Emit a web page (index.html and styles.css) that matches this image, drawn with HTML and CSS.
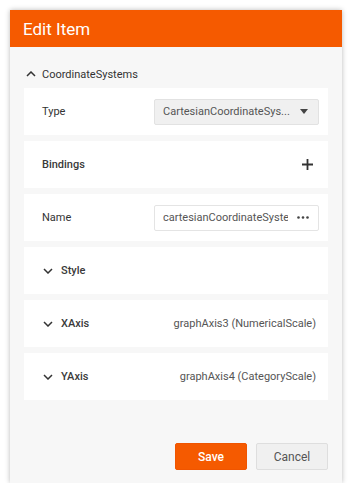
FILE: index.html
```html
<!DOCTYPE html>
<html>
<head>
<meta charset="utf-8">
<link rel="stylesheet" href="styles.css">
</head>
<body>
<div class="dialog">
  <div class="header">Edit Item</div>
  <div class="body">
    <div class="section-title">
      <svg class="chev" width="10" height="6" viewBox="0 0 10 6"><path d="M1 5 L5 1 L9 5" fill="none" stroke="#333" stroke-width="1.5"/></svg>
      <span>CoordinateSystems</span>
    </div>
    <div class="cards">
      <div class="card">
        <span class="label">Type</span>
        <div class="select">
          <span class="val">CartesianCoordinateSys...</span>
          <svg width="8" height="5" viewBox="0 0 8 5"><path d="M0 0 H8 L4 5 Z" fill="#444"/></svg>
        </div>
      </div>
      <div class="card">
        <span class="label strong">Bindings</span>
        <svg class="plus" width="11" height="11" viewBox="0 0 11 11"><path d="M5.5 0 V11 M0 5.5 H11" stroke="#333" stroke-width="1.8"/></svg>
      </div>
      <div class="card">
        <span class="label">Name</span>
        <div class="input">
          <span class="val">cartesianCoordinateSystem1</span>
          <svg class="dots" width="12" height="3" viewBox="0 0 12 3"><circle cx="1.5" cy="1.5" r="1.3" fill="#444"/><circle cx="6" cy="1.5" r="1.3" fill="#444"/><circle cx="10.5" cy="1.5" r="1.3" fill="#444"/></svg>
        </div>
      </div>
      <div class="card">
        <svg class="chev2" width="10" height="6" viewBox="0 0 10 6"><path d="M1 1 L5 5 L9 1" fill="none" stroke="#333" stroke-width="1.5"/></svg>
        <span class="label strong">Style</span>
      </div>
      <div class="card">
        <svg class="chev2" width="10" height="6" viewBox="0 0 10 6"><path d="M1 1 L5 5 L9 1" fill="none" stroke="#333" stroke-width="1.5"/></svg>
        <span class="label strong">XAxis</span>
        <span class="summary">graphAxis3 (NumericalScale)</span>
      </div>
      <div class="card">
        <svg class="chev2" width="10" height="6" viewBox="0 0 10 6"><path d="M1 1 L5 5 L9 1" fill="none" stroke="#333" stroke-width="1.5"/></svg>
        <span class="label strong">YAxis</span>
        <span class="summary">graphAxis4 (CategoryScale)</span>
      </div>
    </div>
  </div>
  <div class="footer">
    <button class="btn save">Save</button>
    <button class="btn cancel">Cancel</button>
  </div>
</div>
</body>
</html>
```

FILE: styles.css
```css
* { box-sizing: border-box; }
body {
  margin: 0;
  background: #fff;
  font-family: Roboto, "Liberation Sans", sans-serif;
}
.dialog {
  margin: 10px 0 0 10px;
  width: 332px;
  height: 473px;
  background: #f7f7f7;
  box-shadow: 0 0 5px rgba(0,0,0,0.28);
  display: flex;
  flex-direction: column;
}
.header {
  height: 37px;
  background: #f55a00;
  color: #fff;
  font-size: 17px;
  display: flex;
  align-items: center;
  padding-left: 13px;
}
.body {
  flex: 1;
  padding: 0 14px;
}
.section-title {
  display: flex;
  align-items: center;
  height: 14px;
  margin: 20px 0 7px 2px;
  font-size: 11px;
  color: #333;
}
.section-title .chev { margin-right: 6px; }
.cards {
  display: flex;
  flex-direction: column;
  gap: 6px;
}
.card {
  height: 47px;
  background: #fff;
  display: flex;
  align-items: center;
  padding: 0 9px 0 18px;
  font-size: 11px;
  color: #333;
}
.label { flex: 1; }
.label.strong { font-weight: 500; color: #3a3a3a; }
.chev2 { margin-right: 8px; margin-left: 1px; }
.select, .input {
  width: 165px;
  height: 26px;
  display: flex;
  align-items: center;
  padding: 0 8px 0 8px;
  color: #555;
  font-size: 11px;
  border-radius: 2px;
}
.select {
  background: #f0f0f0;
  border: 1px solid #e2e2e2;
}
.input {
  background: #fff;
  border: 1px solid #e4e4e4;
}
.val {
  flex: 1;
  overflow: hidden;
  white-space: nowrap;
}
.select svg { margin: 0 2px 0 4px; flex-shrink: 0; }
.dots { margin: 0 1px 0 9px; flex-shrink: 0; }
.plus { margin-right: 6px; }
.summary {
  color: #555;
  padding-right: 3px;
}
.footer {
  display: flex;
  justify-content: flex-end;
  gap: 9px;
  padding: 0 14px 13px 0;
}
.btn {
  width: 72px;
  height: 27px;
  font-family: Roboto, "Liberation Sans", sans-serif;
  font-size: 12px;
  border-radius: 2px;
  cursor: pointer;
}
.save {
  background: #f55a00;
  color: #fff;
  border: 1px solid #f05500;
  font-weight: 500;
}
.cancel {
  background: #f0f0f0;
  color: #555;
  border: 1px solid #dedede;
}
```
